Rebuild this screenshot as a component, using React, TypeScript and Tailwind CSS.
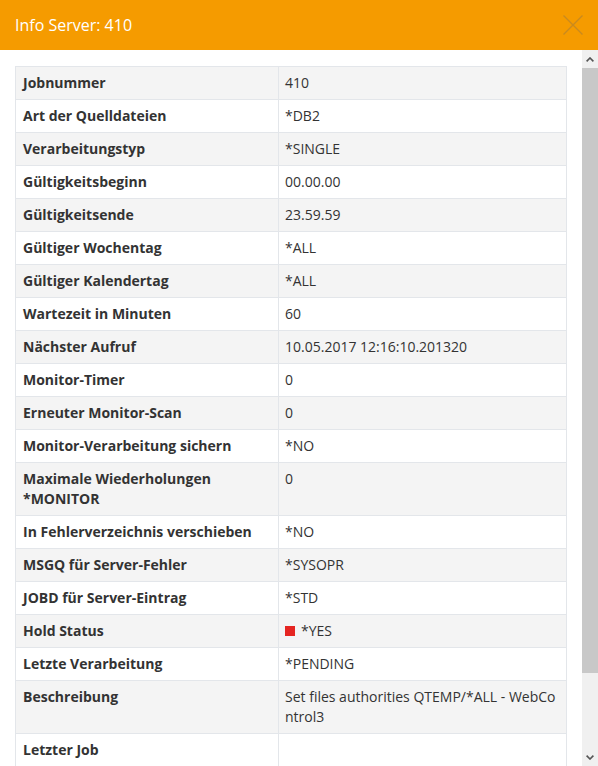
import React from 'react';

interface InfoRow {
  label: string;
  value: string;
  hold?: boolean;
}

const rows: InfoRow[] = [
  { label: 'Jobnummer', value: '410' },
  { label: 'Art der Quelldateien', value: '*DB2' },
  { label: 'Verarbeitungstyp', value: '*SINGLE' },
  { label: 'Gültigkeitsbeginn', value: '00.00.00' },
  { label: 'Gültigkeitsende', value: '23.59.59' },
  { label: 'Gültiger Wochentag', value: '*ALL' },
  { label: 'Gültiger Kalendertag', value: '*ALL' },
  { label: 'Wartezeit in Minuten', value: '60' },
  { label: 'Nächster Aufruf', value: '10.05.2017 12:16:10.201320' },
  { label: 'Monitor-Timer', value: '0' },
  { label: 'Erneuter Monitor-Scan', value: '0' },
  { label: 'Monitor-Verarbeitung sichern', value: '*NO' },
  { label: 'Maximale Wiederholungen *MONITOR', value: '0' },
  { label: 'In Fehlerverzeichnis verschieben', value: '*NO' },
  { label: 'MSGQ für Server-Fehler', value: '*SYSOPR' },
  { label: 'JOBD für Server-Eintrag', value: '*STD' },
  { label: 'Hold Status', value: '*YES', hold: true },
  { label: 'Letzte Verarbeitung', value: '*PENDING' },
  { label: 'Beschreibung', value: 'Set files authorities QTEMP/*ALL - WebControl3' },
  { label: 'Letzter Job', value: '' },
  { label: 'Letzter Benutzer', value: '' },
  { label: 'Erstellt am', value: '' },
];

function Chevron({ up }: { up?: boolean }) {
  return (
    <svg viewBox="0 0 8 5" className="w-[8px] h-[5px]" fill="none" stroke="#555" strokeWidth="1.6">
      <path d={up ? 'M0.6 4.4 L4 1 L7.4 4.4' : 'M0.6 0.6 L4 4 L7.4 0.6'} />
    </svg>
  );
}

export default function App() {
  return (
    <div
      className="w-[598px] h-[766px] flex flex-col bg-white text-[#333]"
      style={{ fontFamily: '"Open Sans", "Liberation Sans", sans-serif' }}
    >
      <div className="h-[50px] shrink-0 bg-[#f59b00] flex items-center justify-between pl-[15px] pr-[15px]">
        <h2 className="text-white text-[16px] leading-none">Info Server: 410</h2>
        <button className="w-[20px] h-[20px] text-[#c98a1e]">
          <svg viewBox="0 0 20 20" className="w-full h-full" fill="none" stroke="currentColor" strokeWidth="1.4">
            <path d="M0.5 0.5 L19.5 19.5 M19.5 0.5 L0.5 19.5" />
          </svg>
        </button>
      </div>

      <div className="flex-1 flex min-h-0">
        <div className="flex-1 overflow-hidden">
          <div className="pl-[15px] pr-[15px] pt-4 pb-4">
            <table className="w-full border-collapse text-[14px] leading-5">
              <tbody>
                {rows.map((row, i) => (
                  <tr key={row.label} className={i % 2 === 0 ? 'bg-[#f4f4f4]' : 'bg-white'}>
                    <td className="w-[263px] border border-[#e3e6ea] px-[7px] py-[6px] align-top font-bold text-[#333]">
                      {row.label}
                    </td>
                    <td className="border border-[#e3e6ea] px-[6px] py-[6px] align-top break-all">
                      {row.hold ? (
                        <span className="flex items-center gap-[6px]">
                          <span className="w-[10px] h-[10px] bg-[#e52521] inline-block" />
                          {row.value}
                        </span>
                      ) : (
                        row.value
                      )}
                    </td>
                  </tr>
                ))}
              </tbody>
            </table>
          </div>
        </div>

        {/* vertical scrollbar */}
        <div className="w-[16px] shrink-0 flex flex-col bg-[#f0f0f0]">
          <div className="h-[18px] shrink-0 flex items-center justify-center">
            <Chevron up />
          </div>
          <div className="h-[605px] shrink-0 bg-[#c8c8c8]" />
          <div className="flex-1" />
          <div className="h-[18px] shrink-0 flex items-center justify-center">
            <Chevron />
          </div>
        </div>
      </div>
    </div>
  );
}
